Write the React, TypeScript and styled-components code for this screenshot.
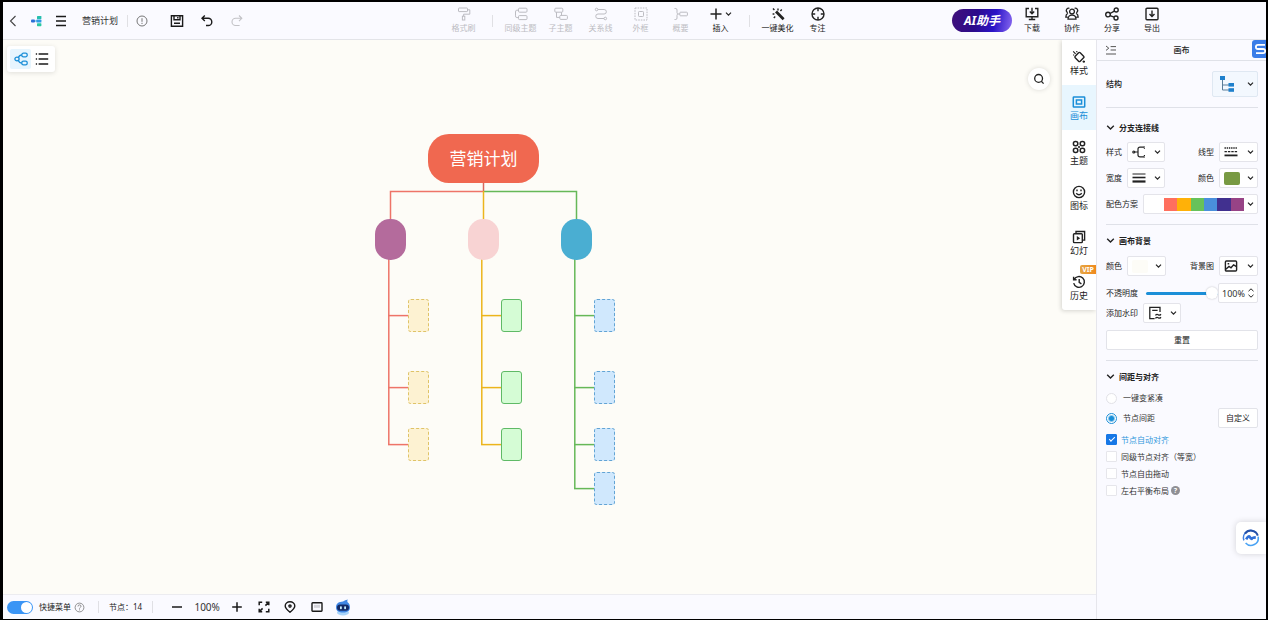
import React from "react";
import styled, { createGlobalStyle, css } from "styled-components";

const GlobalStyle = createGlobalStyle`
  *, *::before, *::after { box-sizing: border-box; }
  body { margin: 0; background: #000; }
  body, button, input, select {
    font-family: "Noto Sans", "Noto Sans CJK SC", sans-serif;
  }
  button { border: 0; padding: 0; background: none; color: inherit; cursor: pointer; }
`;

const BLUE = "#1b8fd8";

/* ---------- shell ---------- */

const Frame = styled.div`
  display: flex;
  flex-direction: column;
  min-height: 100vh;
  border: solid #000;
  border-width: 2px 2px 1px 3px;
  background: #fafaff;
  color: #222;
  font-size: 8px;
  line-height: 12px;
`;

const TopBar = styled.header`
  display: grid;
  grid-template-columns: 1fr auto 1fr;
  align-items: center;
  height: 38px;
  border-bottom: 1px solid #e3e4e8;
`;

const Body = styled.div`
  display: flex;
  flex: 1;
`;

const Workspace = styled.div`
  display: flex;
  flex: 1;
  flex-direction: column;
  min-width: 0;
`;

const Canvas = styled.main`
  position: relative;
  flex: 1;
  background: #fdfcf7;
  overflow: hidden;
`;

/* ---------- top bar ---------- */

const Cluster = styled.div<{ $gap?: number; $lead?: number }>`
  display: flex;
  align-items: center;
  gap: ${(p) => p.$gap ?? 0}px;
  margin-left: ${(p) => p.$lead ?? 0}px;
`;

const IconButton = styled.button<{ $width?: number; $color?: string }>`
  display: flex;
  align-items: center;
  justify-content: center;
  width: ${(p) => p.$width ?? 20}px;
  height: 20px;
  color: ${(p) => p.$color ?? "#1a1a1a"};
`;

const DocTitle = styled.h1`
  margin: 0;
  padding: 0 5px 0 7px;
  font-size: 9px;
  font-weight: 400;
  color: #333;
  white-space: nowrap;
`;

const Divider = styled.span<{ $space?: number }>`
  width: 1px;
  height: 12px;
  margin: 0 ${(p) => p.$space ?? 0}px;
  background: #e0e0e4;
`;

const Tool = styled.button`
  display: flex;
  flex-direction: column;
  align-items: center;
  gap: 1px;
  width: 40px;
  font-size: 8px;
  line-height: 12px;
  color: #222;
  white-space: nowrap;
  &:disabled { color: #bcbcc2; cursor: default; }
`;

const ToolIcons = styled.span`
  display: flex;
  align-items: center;
  gap: 3px;
  height: 14px;
`;

const Actions = styled.div`
  display: flex;
  align-items: center;
  justify-content: flex-end;
  padding-right: 94px;
`;

const AiButton = styled.button`
  width: 60px;
  height: 23px;
  border-radius: 12px;
  background: linear-gradient(100deg, #40107a 0%, #2c0b8c 40%, #2a14c8 70%, #8a6af0 100%);
  color: #fff;
  font-size: 12px;
  font-style: italic;
  font-weight: 700;
  line-height: 22px;
  white-space: nowrap;
`;

/* ---------- canvas overlays ---------- */

const ViewSwitch = styled.div`
  position: absolute;
  top: 6px;
  left: 4px;
  display: flex;
  padding: 3px;
  border-radius: 3px;
  background: #fff;
  box-shadow: 0 1px 5px rgba(0, 0, 0, 0.12);
`;

const ViewButton = styled.button<{ $active?: boolean }>`
  display: flex;
  align-items: center;
  justify-content: center;
  width: 21px;
  height: 20px;
  border-radius: 2px;
  background: ${(p) => (p.$active ? "#e6f5fe" : "transparent")};
  color: ${(p) => (p.$active ? BLUE : "#1a1a1a")};
`;

const SearchButton = styled.button`
  position: absolute;
  top: 28px;
  right: 46px;
  display: flex;
  align-items: center;
  justify-content: center;
  width: 22px;
  height: 22px;
  border-radius: 50%;
  background: #fff;
  box-shadow: 0 0 5px rgba(0, 0, 0, 0.14);
`;

const SideTabs = styled.nav`
  position: absolute;
  top: 0;
  right: 0;
  width: 34px;
  background: #fff;
  border-radius: 0 0 0 3px;
  box-shadow: -1px 1px 4px rgba(0, 0, 0, 0.16);
`;

const SideTab = styled.button<{ $active?: boolean }>`
  position: relative;
  display: flex;
  flex-direction: column;
  align-items: center;
  width: 100%;
  height: 45px;
  padding-top: 10px;
  font-size: 9px;
  line-height: 14px;
  background: ${(p) => (p.$active ? "#e8f6fe" : "transparent")};
  color: ${(p) => (p.$active ? BLUE : "#222")};
`;

const VipBadge = styled.span`
  position: absolute;
  top: 0;
  right: 0;
  width: 16px;
  border-radius: 2px 0 0 2px;
  background: linear-gradient(90deg, #e6a646, #f08a1c);
  color: #fff;
  font-size: 7px;
  font-weight: 700;
  line-height: 9px;
  text-align: center;
`;

/* ---------- mind map ---------- */

const Board = styled.div`
  position: absolute;
  top: 90px;
  left: 369px;
  width: 250px;
  height: 380px;
`;

const Links = styled.svg`
  display: block;
  fill: none;
  stroke-width: 1.5;
`;

type Box = { $x: number; $y: number };

const at = css<Box>`
  position: absolute;
  left: ${(p) => p.$x - 372}px;
  top: ${(p) => p.$y - 130}px;
`;

const RootNode = styled.div<Box>`
  ${at}
  width: 111px;
  height: 49px;
  border-radius: 21px;
  background: #f06850;
  color: #fff;
  font-size: 17px;
  line-height: 50px;
  text-align: center;
  white-space: nowrap;
`;

const BranchNode = styled.div<Box & { $fill: string }>`
  ${at}
  width: 31px;
  height: 41px;
  border-radius: 15px;
  background: ${(p) => p.$fill};
`;

const LeafNode = styled.div<Box & { $fill: string; $line: string; $dashed?: boolean }>`
  ${at}
  width: 21px;
  height: 33px;
  border: 1px ${(p) => (p.$dashed ? "dashed" : "solid")} ${(p) => p.$line};
  border-radius: 3px;
  background: ${(p) => p.$fill};
`;

const branches = [
  { x: 375, fill: "#b46b9c", line: "#ee7468", leaf: "#fdf2d2", edge: "#dfc368", dashed: true, ys: [299, 371, 428] },
  { x: 468, fill: "#f8d3d3", line: "#ecb51c", leaf: "#d5fcd5", edge: "#5fba66", dashed: false, ys: [299, 371, 428] },
  { x: 561, fill: "#4aaed2", line: "#66b858", leaf: "#d0e8fd", edge: "#62a4d4", dashed: true, ys: [299, 371, 428, 472] },
];

/* ---------- status bar ---------- */

const StatusBar = styled.footer`
  display: flex;
  align-items: center;
  height: 25px;
  padding-left: 4px;
  border-top: 1px solid #ececf0;
  white-space: nowrap;
`;

const SwitchLabel = styled.label`
  display: flex;
  align-items: center;
  gap: 6px;
`;

const Switch = styled.input`
  appearance: none;
  position: relative;
  width: 26px;
  height: 13px;
  margin: 0;
  border-radius: 7px;
  background: #3b95f5;
  &::after {
    content: "";
    position: absolute;
    top: 1px;
    right: 1px;
    width: 11px;
    height: 11px;
    border-radius: 50%;
    background: #fff;
  }
`;

const Zoom = styled.output`
  width: 34px;
  font-size: 10px;
  text-align: center;
  color: #333;
`;

/* ---------- property panel ---------- */

const Panel = styled.aside`
  position: relative;
  width: 170px;
  border-left: 1px solid #e6e6ec;
  background: #fafaff;
`;

const PanelHeader = styled.div`
  display: grid;
  grid-template-columns: 20px 1fr 20px;
  align-items: center;
  height: 21px;
  padding: 0 4px;
  border-bottom: 1px solid #e0e2e8;
`;

const PanelTitle = styled.h2`
  margin: 0;
  font-size: 8px;
  font-weight: 500;
  text-align: center;
`;

const Section = styled.section<{ $top?: number; $gap?: number }>`
  display: flex;
  flex-direction: column;
  gap: ${(p) => p.$gap ?? 6}px;
  margin: 0 8px 0 9px;
  padding: ${(p) => p.$top ?? 6}px 0 10px;
  & + & { border-top: 1px solid #dfe1e8; }
`;

const SectionHead = styled.button`
  display: flex;
  align-items: center;
  gap: 4px;
  height: 18px;
  font-size: 8px;
  font-weight: 700;
`;

const Row = styled.div`
  display: flex;
  align-items: center;
  justify-content: space-between;
  min-height: 20px;
`;

const Field = styled.label<{ $grow?: boolean }>`
  display: flex;
  align-items: center;
  gap: 5px;
  flex: ${(p) => (p.$grow ? 1 : "none")};
  white-space: nowrap;
`;

const StrongText = styled.span`
  font-weight: 500;
`;

const PickerBox = styled.span<{ $width?: number; $tall?: boolean }>`
  position: relative;
  display: flex;
  align-items: center;
  justify-content: space-between;
  ${(p) => (p.$width ? `width: ${p.$width}px;` : "flex: 1;")}
  height: ${(p) => (p.$tall ? 26 : 20)}px;
  padding: 0 3px 0 4px;
  border: 1px solid ${(p) => (p.$tall ? "#dfe8f2" : "#e4e4ea")};
  border-radius: 2px;
  background: ${(p) => (p.$tall ? "#f3f8fe" : "#fff")};
`;

const NativeSelect = styled.select`
  position: absolute;
  inset: 0;
  width: 100%;
  border: 0;
  appearance: none;
  background: transparent;
  cursor: pointer;
`;

const Swatch = styled.span<{ $color: string }>`
  width: 16px;
  height: 13px;
  border-radius: 2px;
  background: ${(p) => p.$color};
`;

const Palette = styled.span`
  display: flex;
  flex: 1;
  height: 13px;
  margin: 0 3px 0 16px;
`;

const PaletteCell = styled.span<{ $color: string }>`
  flex: 1;
  background: ${(p) => p.$color};
`;

const Slider = styled.input`
  appearance: none;
  flex: 1;
  width: 0;
  height: 12px;
  margin: 0 0 0 3px;
  background: transparent;
  &::-webkit-slider-runnable-track {
    height: 3px;
    border-radius: 2px;
    background: ${BLUE};
  }
  &::-webkit-slider-thumb {
    appearance: none;
    width: 12px;
    height: 12px;
    margin-top: -5px;
    border-radius: 50%;
    background: #fff;
    box-shadow: 0 0 2px rgba(0, 0, 0, 0.25);
  }
`;

const Spinner = styled.div`
  display: flex;
  align-items: center;
  width: 40px;
  height: 20px;
  padding: 0 2px 0 3px;
  border: 1px solid #e4e4ea;
  border-radius: 2px;
  background: #fff;
`;

const SpinnerInput = styled.input`
  flex: 1;
  width: 0;
  padding: 0;
  border: 0;
  background: transparent;
  font-size: 9px;
  color: #333;
`;

const SpinnerArrows = styled.div`
  display: flex;
  flex-direction: column;
`;

const SpinnerArrow = styled.button`
  display: flex;
  align-items: center;
  width: 8px;
  height: 6px;
`;

const BorderedButton = styled.button<{ $width?: string }>`
  width: ${(p) => p.$width ?? "100%"};
  height: 20px;
  border: 1px solid #e2e3e9;
  border-radius: 2px;
  background: #fff;
  font-size: 8px;
  line-height: 12px;
`;

const Options = styled.div`
  display: flex;
  flex-direction: column;
`;

const Option = styled.label<{ $active?: boolean; $gap?: number }>`
  display: flex;
  align-items: center;
  gap: ${(p) => p.$gap ?? 4}px;
  height: 17px;
  color: ${(p) => (p.$active ? "#2f98dc" : "#333")};
  white-space: nowrap;
`;

const Radio = styled.input`
  appearance: none;
  width: 11px;
  height: 11px;
  margin: 0;
  border: 1px solid #e2e2e7;
  border-radius: 50%;
  background: #fff;
  &:checked {
    border-color: ${BLUE};
    background: radial-gradient(circle, ${BLUE} 0 2px, #fff 4px);
  }
`;

const Check = styled.input`
  appearance: none;
  display: grid;
  place-items: center;
  width: 11px;
  height: 11px;
  margin: 0;
  border: 1px solid #e6e6eb;
  border-radius: 1px;
  background: #fff;
  &:checked { border-color: #1677e6; background: #1677e6; }
  &:checked::after {
    content: "";
    width: 6px;
    height: 3px;
    margin-bottom: 2px;
    border: solid #fff;
    border-width: 0 0 1px 1px;
    transform: rotate(-45deg);
  }
`;

const HelpDot = styled.span`
  display: grid;
  place-items: center;
  width: 9px;
  height: 9px;
  margin-left: -2px;
  border-radius: 50%;
  background: #8f8f94;
  color: #fff;
  font-size: 7px;
  font-weight: 700;
  line-height: 9px;
`;

const CornerTool = styled.button`
  position: absolute;
  top: 0;
  right: 0;
  width: 14px;
  height: 18px;
  border-radius: 3px 0 0 3px;
  background: #3a7de8;
  overflow: hidden;
`;

const ChatTool = styled.button`
  position: absolute;
  right: 0;
  bottom: 65px;
  display: grid;
  place-items: center;
  width: 30px;
  height: 32px;
  border-radius: 5px 0 0 5px;
  background: #fff;
  box-shadow: 0 0 6px rgba(0, 0, 0, 0.16);
`;

/* ---------- icons ---------- */

const Icon = ({ w = 14, h = 14, sw = 1.2, children }: { w?: number; h?: number; sw?: number; children: React.ReactNode }) => (
  <svg width={w} height={h} viewBox={`0 0 ${w} ${h}`} fill="none" stroke="currentColor" strokeWidth={sw} aria-hidden="true">
    {children}
  </svg>
);

const Chevron = () => (
  <Icon w={7} h={6} sw={1.2}><path d="M1 1.6 3.5 4.2 6 1.6" /></Icon>
);

const HeadChevron = () => (
  <Icon w={9} h={9} sw={1.4}><path d="M1.2 2.8 4.5 6l3.3-3.2" /></Icon>
);

const icons = {
  back: <Icon sw={1.1}><path d="M9.5 2 4.5 7l5 5" /></Icon>,
  logo: (
    <Icon sw={0}>
      <rect x="1" y="5.5" width="4" height="3" rx="1" fill="#2a6fd6" />
      <rect x="5" y="6.5" width="2" height="1" fill="#3aa6e0" />
      <rect x="7" y="2" width="4.4" height="3" rx="0.6" fill="#26bfae" />
      <rect x="6.4" y="5.6" width="5" height="3" rx="0.6" fill="#2f9be6" />
      <rect x="7" y="9.2" width="4.4" height="3" rx="0.6" fill="#29c7a0" />
    </Icon>
  ),
  menu: <Icon sw={1.3}><path d="M2 2.5h10M2 7h10M2 11.5h10" /></Icon>,
  info: <Icon w={12} h={12} sw={1}><circle cx="6" cy="6" r="5" /><path d="M6 3.2v3.6M6 7.8v1.2" /></Icon>,
  save: <Icon sw={1.4}><path d="M1.4 1.7h11.2v10.6H1.4zM4 1.7v4.1h6V1.7M4 9.3h6M7.8 3v1.5" /></Icon>,
  undo: <Icon sw={1.4}><path d="M4.8 1.5 2 4.3l2.8 2.8M2 4.3h6.2a3.6 3.6 0 0 1 0 7.2H6" /></Icon>,
  redo: <Icon sw={1.1}><path d="M9 1.5l2.8 2.8L9 7.1M11.8 4.3H5.6a3.6 3.6 0 0 0 0 7.2h4" /></Icon>,
  brush: <Icon sw={1}><rect x="1.5" y="1" width="9" height="3.6" rx="0.6" /><path d="M10.5 2.8h2.3v4.4H6.6v2" /><rect x="5.4" y="9.2" width="2.4" height="3.8" /></Icon>,
  sibling: <Icon sw={1}><rect x="4.5" y="1.2" width="8.5" height="4" rx="1" /><rect x="4.5" y="8.6" width="8.5" height="4" rx="1" /><path d="M4.5 3.2H2.8Q1.5 3.2 1.5 5v3.8q0 1.8 1.3 1.8h1.7" /></Icon>,
  child: <Icon sw={1}><rect x="0.8" y="1.2" width="8" height="4" rx="1" /><rect x="5.8" y="8.4" width="7.6" height="4" rx="1" /><path d="M2.5 5.2v5.2h3.3M7.5 5.2v3.2" /></Icon>,
  relation: <Icon sw={1}><circle cx="2.6" cy="2.5" r="1.3" /><path d="M3.9 2.5h6.2a2.2 2.2 0 0 1 0 4.5H4a2.2 2.2 0 0 0 0 4.5h6" /><circle cx="11.3" cy="11.5" r="1.3" /></Icon>,
  frame: <Icon sw={1}><rect x="1" y="1" width="12" height="12" strokeDasharray="1.6 1" /><rect x="4.5" y="4.5" width="5" height="5" rx="0.8" /></Icon>,
  summary: <Icon sw={1}><path d="M0.5 1.5h1.3Q3 1.5 3 3v2.6Q3 7 4.4 7 3 7 3 8.4V11q0 1.5-1.2 1.5H0.5M4.4 7h1.4" /><rect x="5.8" y="5.2" width="7.6" height="3.6" rx="0.8" /></Icon>,
  plus: <Icon w={12} h={12} sw={1.5}><path d="M6 0.5v11M0.5 6h11" /></Icon>,
  wand: (
    <Icon sw={1}>
      <path d="M5 4.6 12.6 12.2" strokeWidth="2.8" />
      <path d="M7 1.6v1.8M1.6 7h1.8M10.8 2.6 9.4 4M2 1.6l1.4 1.4M2.8 11l1.4-1.4" strokeWidth="1.4" />
    </Icon>
  ),
  focus: <Icon sw={1.4}><circle cx="7" cy="7" r="6" /><path d="M7 1v3.2M7 9.8V13M1 7h3.2M9.8 7H13" /></Icon>,
  download: <Icon sw={1.4}><path d="M4 1.5H1.2v8.3h11.6V1.5H10M7 0.8v5.6M4.8 4.6 7 6.8l2.2-2.2M7 9.8v2.6M3.8 12.5h6.4" /></Icon>,
  team: (
    <Icon sw={1.3}>
      <circle cx="7" cy="4.6" r="2.4" />
      <path d="M3 12.2c0-2.6 1.6-4 4-4s4 1.4 4 4zM4.4 1.4A2.2 2.2 0 0 0 2.8 5.6M9.6 1.4a2.2 2.2 0 0 1 1.6 4.2M2.9 6.2Q0.8 7.4 0.8 10.2h1.8M11.1 6.2q2.1 1.2 2.1 4h-1.8" />
    </Icon>
  ),
  share: <Icon sw={1.4}><circle cx="3" cy="7.6" r="2.3" /><circle cx="11.2" cy="3" r="2" /><circle cx="11" cy="11" r="2" /><path d="M5.1 6.5 9.3 4.2M5.1 8.7l4 1.4" /></Icon>,
  export: <Icon sw={1.4}><rect x="1" y="1.2" width="12" height="11.6" rx="1" /><path d="M7 3.4v5.8M4.5 7 7 9.5 9.5 7" /></Icon>,
  mapView: <Icon sw={1.3}><ellipse cx="3" cy="7" rx="2.1" ry="1.8" /><rect x="7.8" y="1.2" width="5.4" height="3.6" rx="1.6" /><rect x="7.8" y="9.2" width="5.4" height="3.6" rx="1.6" /><path d="M4.4 5.6Q5.4 3 7.8 3M4.4 8.4Q5.4 11 7.8 11" /></Icon>,
  listView: <Icon sw={1.3}><path d="M3.6 2h9.6M3.6 7h9.6M3.6 12h9.6M0.8 2h1.3M0.8 7h1.3M0.8 12h1.3" /></Icon>,
  search: <Icon w={12} h={12} sw={1.3}><circle cx="5.6" cy="5.4" r="3.9" /><path d="M8.3 8.3 10.6 10.6" /></Icon>,
  style: (
    <Icon sw={1.4}>
      <path d="M6.6 2.8Q7.4 2 8.2 2.8l3.4 3.4q.8.8 0 1.6l-3.4 3.4q-.8.8-1.6 0L3.2 7.8q-.8-.8 0-1.6z" />
      <path d="M1.2 1.4 3.6 3.8M1 5h1.2M4.8 1v1.2M11.8 10.4v2.4M10.6 11.6H13" strokeWidth="1.2" />
    </Icon>
  ),
  canvas: <Icon sw={1.5}><rect x="1.3" y="2" width="11.4" height="10" rx="0.6" /><rect x="4.4" y="5" width="5.2" height="4" /></Icon>,
  theme: <Icon sw={1.5}><rect x="1.4" y="1.4" width="4.4" height="4.4" rx="2" /><rect x="8.2" y="1.4" width="4.4" height="4.4" rx="2" /><rect x="1.4" y="8.2" width="4.4" height="4.4" rx="2" /><rect x="8.2" y="8.2" width="4.4" height="4.4" rx="2" /><path d="M5.8 5.8 8.2 8.2M8.2 5.8 5.8 8.2" strokeWidth="0.8" /></Icon>,
  smile: <Icon sw={1.4}><circle cx="7" cy="7" r="5.6" /><path d="M5 4.6v1.6M9 4.6v1.6M4.2 8.2q2.8 3 5.6 0" /></Icon>,
  slides: <Icon sw={1.4}><rect x="1.5" y="3.8" width="8.8" height="8.8" rx="0.8" /><path d="M4 3.8V1.5h8.6v8.6h-2.3" /><path d="M4.8 5.9v4.6l3.4-2.3z" fill="currentColor" stroke="none" /></Icon>,
  history: <Icon sw={1.4}><path d="M2.2 4.4A5.4 5.4 0 1 1 1.7 8.2M1.6 1.8v3h3M7.2 4v3.4l2.2 1.4" /></Icon>,
  collapse: <Icon w={12} h={12} sw={1}><path d="M1 2 3.8 4.2 1 6.4M5.6 2.6H11M5.6 6H11M1 10h10" /></Icon>,
  structure: (
    <Icon w={16} h={18} sw={1}>
      <path d="M3.5 4v11H10M3.5 10H10" stroke="#5b7d98" />
      <g fill="#1f80cc" stroke="none"><rect x="1" y="1" width="5" height="4" /><rect x="9.5" y="8" width="5.5" height="3.6" /><rect x="9.5" y="13.2" width="5.5" height="3.6" /></g>
    </Icon>
  ),
  branch: <Icon w={14} h={14} sw={1.2}><circle cx="1.8" cy="7" r="1" /><path d="M2.8 7H6M12 2.2H8Q6 2.2 6 4v6q0 1.8 2 1.8h4" /><path d="M12.4 1.4v2.6M12.4 10v2.6" strokeDasharray="1.2 .6" /></Icon>,
  lineType: <Icon w={14} h={12} sw={1.3}><path d="M0.5 2h13" strokeDasharray="1.4 .8" /><path d="M0.5 5.6h13" strokeDasharray="2.4 1" /><path d="M0.5 9.4h13" strokeWidth="1.8" /></Icon>,
  lineWidth: <Icon w={14} h={12} sw={1}><path d="M0.5 2h13" /><path d="M0.5 5.5h13" strokeWidth="1.6" /><path d="M0.5 9.5h13" strokeWidth="2.2" /></Icon>,
  image: <Icon w={14} h={12} sw={1.4}><rect x="1.4" y="1" width="11.2" height="10" rx="1" /><path d="M1.8 9.2 5 6.4l2 1.4 2.6-3 3 1.8M3.6 3.8h1.6" /></Icon>,
  watermark: <Icon w={14} h={14} sw={1.3}><path d="M12 6V1.4H1.8v11.2H6.6M4.2 4.4h5.4M7.4 9.4q1.4-1.6 2.8-.6t2.8-.6M7.4 12.4q1.4-1.6 2.8-.6t2.8-.6" /></Icon>,
  help: <Icon w={11} h={11} sw={0.8}><circle cx="5.5" cy="5.5" r="4.4" /><path d="M4 4.5q0-1.6 1.5-1.6T7 4.3q0 .8-.8 1.2t-.7 1.1M5.5 7.4v1" /></Icon>,
  minus: <Icon w={12} h={12} sw={1.5}><path d="M1 6h10" /></Icon>,
  add: <Icon w={12} h={12} sw={1.5}><path d="M1.2 6h9.6M6 1.2v9.6" /></Icon>,
  expand: <Icon w={12} h={12} sw={1.5}><path d="M1.2 4.2v-3h3M7.8 1.2h3v3M10.8 7.8v3h-3M4.2 10.8h-3v-3M7.4 4.6 10.4 1.6M1.6 10.4l3-3" /></Icon>,
  pin: <Icon w={12} h={12} sw={1.4}><path d="M6 11.3C2.8 8.6 1.2 7 1.2 5a4.8 4.3 0 0 1 9.6 0c0 2-1.6 3.6-4.8 6.3z" /><circle cx="6" cy="5.1" r="1.1" /></Icon>,
  screen: <Icon w={12} h={12} sw={1.4}><rect x="1" y="1.8" width="10" height="8.4" rx="0.6" /><path d="M3 3.8h6v3H3z" fill="#d4d4da" stroke="none" /></Icon>,
  robot: (
    <Icon w={16} h={18} sw={0}>
      <ellipse cx="8" cy="14.5" rx="6" ry="3" fill="#a8d4fa" />
      <path d="M1 9.5C1 5 4 3.6 8 3.4 9.5 2.6 11 1.8 12.8 1.4c-.6 1.2-.6 1.8-.2 2.8C14.4 5.4 15 7.2 15 9.5c0 3.6-3 5-7 5s-7-1.4-7-5z" fill="#3f86e4" />
      <rect x="2" y="6.4" width="12" height="6.4" rx="3.2" fill="#142a66" />
      <rect x="5" y="8.2" width="1.8" height="3" rx="0.8" fill="#c8f0ff" />
      <rect x="9.2" y="8.2" width="1.8" height="3" rx="0.8" fill="#c8f0ff" />
    </Icon>
  ),
  corner: (
    <Icon w={14} h={18} sw={1.8}>
      <path d="M13 4.9H6Q3.9 4.9 3.9 7T6 9h5.2q2 0 2 2.1t-2 2.1H4" stroke="#fff" />
    </Icon>
  ),
  chat: (
    <Icon w={18} h={18} sw={1.6}>
      <path d="M1.9 11.4A7.3 7.3 0 0 1 14 3.8" stroke="#3f7fe0" />
      <path d="M3 4.6A7.3 7.3 0 0 1 15.8 6.6" stroke="#2450a8" strokeWidth="2" />
      <path d="M16.1 7.6A7.3 7.3 0 0 1 3.6 14" stroke="#4aa3f4" />
      <path d="M4.2 10.4Q6.4 5.8 8 8.2t2 1.4 3.8-1.2" stroke="#2f6fd8" strokeWidth="2.6" />
    </Icon>
  ),
};

/* ---------- composed controls ---------- */

function Picker({ name, width, tall, children }: { name: string; width?: number; tall?: boolean; children: React.ReactNode }) {
  return (
    <PickerBox $width={width} $tall={tall}>
      {children}
      <Chevron />
      <NativeSelect aria-label={name} />
    </PickerBox>
  );
}

const editTools = [
  ["同级主题", icons.sibling],
  ["子主题", icons.child],
  ["关系线", icons.relation],
  ["外框", icons.frame],
  ["概要", icons.summary],
] as const;

const fileActions = [
  ["下载", icons.download],
  ["协作", icons.team],
  ["分享", icons.share],
  ["导出", icons.export],
] as const;

const sideTabs = [
  ["样式", icons.style],
  ["画布", icons.canvas],
  ["主题", icons.theme],
  ["图标", icons.smile],
  ["幻灯", icons.slides],
  ["历史", icons.history],
] as const;

const palette = ["#ff6f5e", "#ffb108", "#67c25a", "#4a90dc", "#41308f", "#974386"];

function ToolItem({ label, disabled, children }: { label: string; disabled?: boolean; children: React.ReactNode }) {
  return (
    <Tool disabled={disabled}>
      <ToolIcons>{children}</ToolIcons>
      {label}
    </Tool>
  );
}

function MindMap() {
  return (
    <Board>
      <Links width="250" height="380" viewBox="372 130 250 380">
        <path d="M483.5 183v8" stroke="#d8685c" />
        <path d="M390.5 219v-27.5h93" stroke="#ee7468" />
        <path d="M483.5 191.5h93v28" stroke="#66b858" />
        <path d="M483.5 191v28" stroke="#ecb51c" />
        {branches.map((b) => (
          <React.Fragment key={b.x}>
            <path d={`M${b.x + 13.8} 255V${b.ys[b.ys.length - 1] + 17}`} stroke={b.line} />
            {b.ys.map((y) => (
              <path key={y} d={`M${b.x + 13} ${y + 16.6}h21`} stroke={b.line} />
            ))}
          </React.Fragment>
        ))}
      </Links>
      <RootNode $x={428} $y={134}>营销计划</RootNode>
      {branches.map((b) => (
        <React.Fragment key={b.x}>
          <BranchNode $x={b.x} $y={219} $fill={b.fill} />
          {b.ys.map((y) => (
            <LeafNode key={y} $x={b.x + 33} $y={y} $fill={b.leaf} $line={b.edge} $dashed={b.dashed} />
          ))}
        </React.Fragment>
      ))}
    </Board>
  );
}

function PropertyPanel() {
  return (
    <Panel>
      <PanelHeader>
        <IconButton $color="#555" aria-label="收起">{icons.collapse}</IconButton>
        <PanelTitle>画布</PanelTitle>
      </PanelHeader>
      <CornerTool aria-label="工具">{icons.corner}</CornerTool>

      <Section $top={10}>
        <Row>
          <StrongText>结构</StrongText>
          <Picker name="结构" width={46} tall>
            <Cluster $lead={2}>{icons.structure}</Cluster>
          </Picker>
        </Row>
      </Section>

      <Section $top={10}>
        <SectionHead><HeadChevron />分支连接线</SectionHead>
        <Row>
          <Field>样式<Picker name="样式" width={38}>{icons.branch}</Picker></Field>
          <Field>线型<Picker name="线型" width={39}>{icons.lineType}</Picker></Field>
        </Row>
        <Row>
          <Field>宽度<Picker name="宽度" width={38}>{icons.lineWidth}</Picker></Field>
          <Field>颜色<Picker name="颜色" width={39}><Swatch $color="#789a42" /></Picker></Field>
        </Row>
        <Row>
          <Field $grow>
            配色方案
            <Picker name="配色方案">
              <Palette>{palette.map((c) => <PaletteCell key={c} $color={c} />)}</Palette>
            </Picker>
          </Field>
        </Row>
      </Section>

      <Section $gap={7}>
        <SectionHead><HeadChevron />画布背景</SectionHead>
        <Row>
          <Field>颜色<Picker name="背景颜色" width={39}><Swatch $color="#fdfcf7" /></Picker></Field>
          <Field>背景图<Picker name="背景图" width={39}>{icons.image}</Picker></Field>
        </Row>
        <div>
          <Row>
            <Field $grow>不透明度<Slider type="range" min={0} max={100} defaultValue={100} /></Field>
            <Spinner>
              <SpinnerInput aria-label="不透明度数值" defaultValue="100%" />
              <SpinnerArrows>
                <SpinnerArrow aria-label="增加"><Icon w={8} h={6} sw={1}><path d="M1.5 4.2 4 1.8l2.5 2.4" /></Icon></SpinnerArrow>
                <SpinnerArrow aria-label="减少"><Icon w={8} h={6} sw={1}><path d="M1.5 1.8 4 4.2l2.5-2.4" /></Icon></SpinnerArrow>
              </SpinnerArrows>
            </Spinner>
          </Row>
          <Row>
            <Field>添加水印<Picker name="添加水印" width={38}>{icons.watermark}</Picker></Field>
          </Row>
        </div>
        <BorderedButton>重置</BorderedButton>
      </Section>

      <Section $gap={3}>
        <SectionHead><HeadChevron />间距与对齐</SectionHead>
        <Options>
          <Row><Option $gap={6}><Radio type="radio" name="spacing" />一键变紧凑</Option></Row>
          <Row>
            <Option $gap={6}><Radio type="radio" name="spacing" defaultChecked />节点间距</Option>
            <BorderedButton $width="40px">自定义</BorderedButton>
          </Row>
        </Options>
        <Options>
          <Option $active><Check type="checkbox" defaultChecked />节点自动对齐</Option>
          <Option><Check type="checkbox" />同级节点对齐（等宽）</Option>
          <Option><Check type="checkbox" />节点自由拖动</Option>
          <Option><Check type="checkbox" />左右平衡布局<HelpDot>?</HelpDot></Option>
        </Options>
      </Section>
      <ChatTool aria-label="客服">{icons.chat}</ChatTool>
    </Panel>
  );
}

export default function App() {
  return (
    <>
      <GlobalStyle />
      <Frame>
        <TopBar>
          <Cluster $gap={4}>
            <IconButton $color="#444" aria-label="返回">{icons.back}</IconButton>
            <IconButton aria-label="主页">{icons.logo}</IconButton>
            <IconButton aria-label="菜单">{icons.menu}</IconButton>
            <DocTitle>营销计划</DocTitle>
            <Divider />
            <IconButton $color="#777" aria-label="信息">{icons.info}</IconButton>
            <Cluster $gap={10} $lead={11}>
              <IconButton aria-label="保存">{icons.save}</IconButton>
              <IconButton aria-label="撤销">{icons.undo}</IconButton>
              <IconButton $color="#c2c2c6" aria-label="重做">{icons.redo}</IconButton>
            </Cluster>
          </Cluster>
          <Cluster $lead={12}>
            <ToolItem label="格式刷" disabled>{icons.brush}</ToolItem>
            <Divider $space={8} />
            {editTools.map(([label, icon]) => (
              <ToolItem key={label} label={label} disabled>{icon}</ToolItem>
            ))}
            <ToolItem label="插入">{icons.plus}<Chevron /></ToolItem>
            <Divider $space={8} />
            <ToolItem label="一键美化">{icons.wand}</ToolItem>
            <ToolItem label="专注">{icons.focus}</ToolItem>
          </Cluster>
          <Actions>
            <AiButton>AI助手</AiButton>
            {fileActions.map(([label, icon]) => (
              <ToolItem key={label} label={label}>{icon}</ToolItem>
            ))}
          </Actions>
        </TopBar>

        <Body>
          <Workspace>
            <Canvas>
              <MindMap />
              <ViewSwitch>
                <ViewButton $active aria-label="导图">{icons.mapView}</ViewButton>
                <ViewButton aria-label="大纲">{icons.listView}</ViewButton>
              </ViewSwitch>
              <SearchButton aria-label="搜索">{icons.search}</SearchButton>
              <SideTabs>
                {sideTabs.map(([label, icon]) => (
                  <SideTab key={label} $active={label === "画布"}>
                    {icon}
                    {label}
                    {label === "历史" && <VipBadge>VIP</VipBadge>}
                  </SideTab>
                ))}
              </SideTabs>
            </Canvas>
            <StatusBar>
              <SwitchLabel><Switch type="checkbox" role="switch" defaultChecked />快捷菜单</SwitchLabel>
              <IconButton $width={17} $color="#777" aria-label="帮助">{icons.help}</IconButton>
              <Divider $space={10} />
              <span>节点：14</span>
              <Divider $space={10} />
              <IconButton $width={27} aria-label="缩小">{icons.minus}</IconButton>
              <Zoom>100%</Zoom>
              <IconButton $width={26} aria-label="放大">{icons.add}</IconButton>
              <IconButton $width={27} aria-label="全屏">{icons.expand}</IconButton>
              <IconButton $width={26} aria-label="定位">{icons.pin}</IconButton>
              <IconButton $width={27} aria-label="演示">{icons.screen}</IconButton>
              <IconButton $width={26} aria-label="助手">{icons.robot}</IconButton>
            </StatusBar>
          </Workspace>
          <PropertyPanel />
        </Body>
      </Frame>
    </>
  );
}
